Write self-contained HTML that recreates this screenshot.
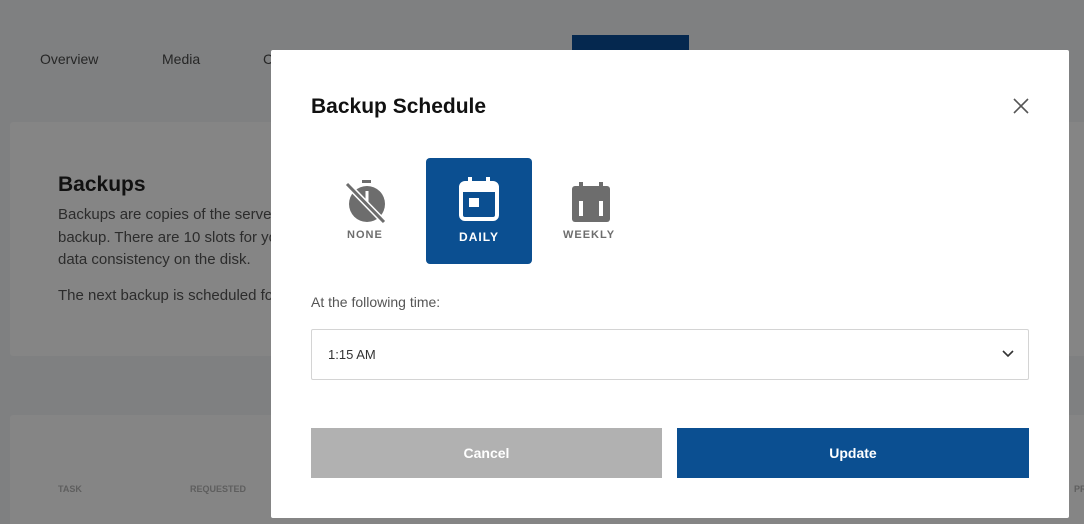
<!DOCTYPE html>
<html><head><style>
*{margin:0;padding:0;box-sizing:border-box}
html,body{width:1084px;height:524px;overflow:hidden}
body{background:#7f8081;font-family:"Liberation Sans",sans-serif;position:relative}
.a{position:absolute}
.card{background:#858585;border-radius:3px}
</style></head><body>
<div class="a" style="left:40px;top:51px;font-size:14px;color:#262626">Overview</div>
<div class="a" style="left:162px;top:51px;font-size:14px;color:#262626">Media</div>
<div class="a" style="left:263px;top:51px;font-size:14px;color:#262626">C</div>
<div class="a" style="left:572px;top:35px;width:117px;height:20px;background:#05284f"></div>
<div class="a" style="left:1069px;top:170px;width:20px;height:50px;background:#05284f"></div>
<div class="a card" style="left:10px;top:122px;width:1080px;height:234px"></div>
<div class="a" style="left:58px;top:173px;font-size:21px;font-weight:bold;color:#111">Backups</div>
<div class="a" style="left:58px;top:204px;font-size:15px;line-height:22.5px;color:#2c2c2c;width:300px;white-space:nowrap">Backups are copies of the server<br>backup. There are 10 slots for you<br>data consistency on the disk.</div>
<div class="a" style="left:58px;top:287px;font-size:15px;color:#2c2c2c;white-space:nowrap">The next backup is scheduled for</div>
<div class="a card" style="left:10px;top:415px;width:1080px;height:120px"></div>
<div class="a" style="left:58px;top:484px;font-size:9px;font-weight:bold;color:#5e5e5e">TASK</div>
<div class="a" style="left:190px;top:484px;font-size:9px;font-weight:bold;color:#5e5e5e">REQUESTED</div>
<div class="a" style="left:1074px;top:484px;font-size:9px;font-weight:bold;color:#5e5e5e">PR</div>

<div class="a" style="left:271px;top:50px;width:798px;height:468px;background:#fff;border-radius:2px">
  <div class="a" style="left:40px;top:45px;font-size:21px;font-weight:bold;color:#111">Backup Schedule</div>
  <svg class="a" style="left:742px;top:48px" width="16" height="16" viewBox="0 0 16 16"><path d="M1 1L15 15M15 1L1 15" stroke="#555" stroke-width="1.6"/></svg>
  <svg class="a" style="left:73px;top:128px" width="44" height="46" viewBox="0 0 44 46">
    <rect x="18" y="2" width="9" height="3" fill="#6d6d6d"/>
    <circle cx="23" cy="26" r="18" fill="#6d6d6d"/>
    <path d="M23 13v13" stroke="#fff" stroke-width="3"/>
    <path d="M3 6L40 44" stroke="#fff" stroke-width="6"/>
    <path d="M3 6L40 44" stroke="#6d6d6d" stroke-width="3"/>
  </svg>
  <div class="a" style="left:76px;top:179px;font-size:11px;font-weight:bold;color:#6d6d6d;letter-spacing:1px">NONE</div>
  <div class="a" style="left:155px;top:108px;width:106px;height:106px;background:#0b4f91;border-radius:4px">
    <svg class="a" style="left:32px;top:18px" width="42" height="46" viewBox="0 0 42 46">
      <rect x="3" y="7" width="36" height="36" rx="4" fill="none" stroke="#fff" stroke-width="4"/>
      <rect x="3" y="7" width="36" height="9" fill="#fff"/>
      <rect x="10" y="1" width="4" height="8" fill="#fff"/><rect x="28" y="1" width="4" height="8" fill="#fff"/>
      <rect x="11" y="22" width="10" height="9" fill="#fff"/>
    </svg>
    <div class="a" style="left:0;width:106px;top:72px;text-align:center;font-size:12px;font-weight:bold;color:#fff;letter-spacing:1px">DAILY</div>
  </div>
  <svg class="a" style="left:300px;top:131px" width="40" height="42" viewBox="0 0 40 42">
    <rect x="1" y="5" width="38" height="36" rx="3" fill="#6d6d6d"/>
    <rect x="8" y="1" width="4" height="6" fill="#6d6d6d"/><rect x="28" y="1" width="4" height="6" fill="#6d6d6d"/>
    <rect x="8" y="20" width="4" height="15" fill="#fff"/><rect x="28" y="20" width="4" height="15" fill="#fff"/>
  </svg>
  <div class="a" style="left:292px;top:179px;font-size:11px;font-weight:bold;color:#6d6d6d;letter-spacing:1px">WEEKLY</div>
  <div class="a" style="left:40px;top:244px;font-size:14px;color:#555">At the following time:</div>
  <div class="a" style="left:40px;top:279px;width:718px;height:51px;border:1px solid #d4d4d4;border-radius:2px">
    <div class="a" style="left:16px;top:17px;font-size:13px;color:#333">1:15 AM</div>
    <svg class="a" style="left:690px;top:20px" width="12" height="8" viewBox="0 0 12 8"><path d="M1 1l5 5 5-5" fill="none" stroke="#333" stroke-width="1.6"/></svg>
  </div>
  <div class="a" style="left:40px;top:378px;width:351px;height:50px;background:#b1b1b1;color:#fff;font-size:14px;font-weight:bold;text-align:center;line-height:50px">Cancel</div>
  <div class="a" style="left:406px;top:378px;width:352px;height:50px;background:#0b4f91;color:#fff;font-size:14px;font-weight:bold;text-align:center;line-height:50px">Update</div>
</div>
</body></html>
